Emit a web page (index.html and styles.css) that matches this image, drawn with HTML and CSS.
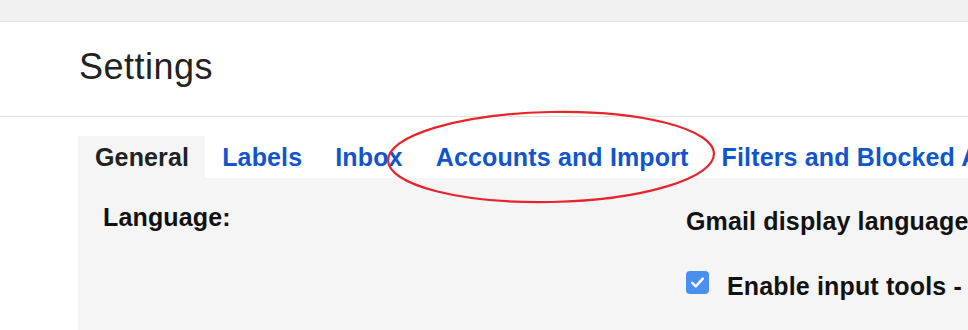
FILE: index.html
```html
<!DOCTYPE html>
<html>
<head>
<meta charset="utf-8">
<link rel="stylesheet" href="styles.css">
</head>
<body>
<div class="topbar"></div>
<header class="header">
  <h1 class="title">Settings</h1>
</header>
<main class="settings">
  <nav class="tabs">
    <span class="tab tab-active">General</span>
    <a class="tab">Labels</a>
    <a class="tab">Inbox</a>
    <a class="tab">Accounts and Import</a>
    <a class="tab">Filters and Blocked Addresses</a>
    <a class="tab">Forwarding and POP/IMAP</a>
  </nav>
  <section class="panel">
    <div class="row">
      <div class="label">Language:</div>
      <div class="values">
        <div class="value-title">Gmail display language:</div>
        <div class="check-row">
          <span class="checkbox">
            <svg viewBox="0 0 23 23" width="23" height="23"><path d="M6.2 11.8 L9.8 15.4 L16.8 7.6" fill="none" stroke="#fff" stroke-width="2.4" stroke-linecap="round" stroke-linejoin="round"/></svg>
          </span>
          <span class="check-label">Enable input tools - Use various text input tools to type in the language of your choice</span>
        </div>
      </div>
    </div>
  </section>
  <svg class="annotation" width="360" height="110" viewBox="0 0 360 110">
    <ellipse cx="180" cy="55" rx="163" ry="45" transform="rotate(-1.2 180 55)" fill="none" stroke="#e8232a" stroke-width="2.2"/>
  </svg>
</main>
</body>
</html>
```
FILE: styles.css
```css
html, body {
  margin: 0;
  padding: 0;
  background: #fff;
  overflow: hidden;
  font-family: "Liberation Sans", Arial, sans-serif;
}

.topbar {
  height: 21px;
  background: #f1f1f1;
  border-bottom: 1px solid #e3e3e3;
}

.header {
  border-bottom: 1px solid #e3e3e3;
  padding-left: 79px;
  box-sizing: border-box;
  height: 95px;
}

.title {
  margin: 0;
  padding-top: 25px;
  font-size: 36px;
  line-height: 40px;
  font-weight: normal;
  color: #222;
  letter-spacing: 0.5px;
}

.settings {
  position: relative;
  padding-top: 19px;
  padding-left: 78px;
}

.tabs {
  display: flex;
  white-space: nowrap;
  height: 42px;
}

.tab {
  flex: none;
  padding: 0 16px 0 17px;
  font-size: 25px;
  line-height: 42px;
  font-weight: bold;
  letter-spacing: 0.15px;
  color: #1155cc;
}

.tab-active {
  background: #f5f5f5;
  color: #222;
  padding-right: 16px;
}

.panel {
  background: #f5f5f5;
  height: 127px;
  padding: 25px 0 0 25px;
}

.row {
  display: flex;
  align-items: flex-start;
  white-space: nowrap;
}

.label {
  width: 583px;
  flex: none;
  font-size: 25px;
  line-height: 29px;
  font-weight: bold;
  letter-spacing: 0.15px;
  color: #111;
}

.values {
  padding-top: 4px;
}

.value-title {
  font-size: 25px;
  line-height: 29px;
  font-weight: bold;
  letter-spacing: 0.15px;
  color: #111;
}

.check-row {
  display: flex;
  align-items: flex-start;
  margin-top: 36px;
}

.checkbox {
  flex: none;
  width: 23px;
  height: 23px;
  border-radius: 4px;
  background: #4a8ff0;
  margin-top: -1px;
  display: flex;
}

.check-label {
  margin-left: 18px;
  font-size: 25px;
  line-height: 29px;
  font-weight: bold;
  letter-spacing: 0.15px;
  color: #111;
}

.annotation {
  position: absolute;
  left: 371px;
  top: -15px;
  overflow: visible;
}
```
